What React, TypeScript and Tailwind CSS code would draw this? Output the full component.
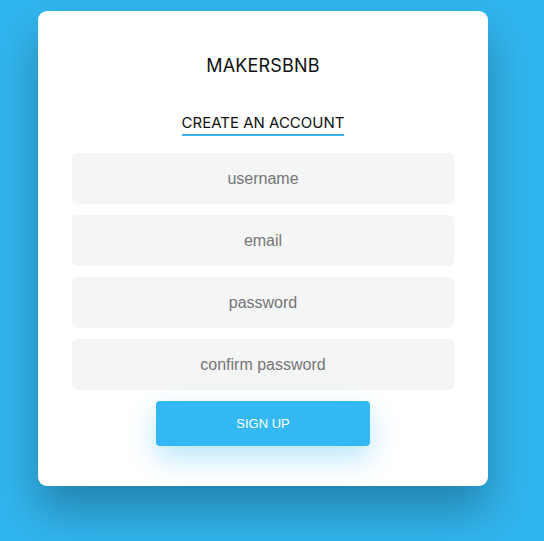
const fields = ['username', 'email', 'password', 'confirm password'];

export default function App() {
  return (
    <div className="min-h-[541px] w-full bg-[#31b5ee] pl-[38px] pt-[11px] overflow-hidden">
      <div className="w-[450px] h-[475px] bg-white rounded-[9px] shadow-[0_25px_45px_rgba(0,0,0,0.28)] px-[34px] pt-[43px] flex flex-col items-center">
        <h1 className="text-[18px] leading-[24px] text-[#111] font-['Inter','Open_Sans',sans-serif] tracking-[0.2px]">
          MAKERSBNB
        </h1>
        <h2 className="mt-[35px] text-[15px] leading-[20px] text-[#111] font-['Inter','Open_Sans',sans-serif] border-b-2 border-[#3ab4ea] pb-[1px]">
          CREATE AN ACCOUNT
        </h2>
        <form className="mt-[17px] w-full flex flex-col gap-[11px]">
          {fields.map((f) => (
            <input
              key={f}
              type={f.includes('password') ? 'password' : 'text'}
              placeholder={f}
              className="w-full h-[51px] bg-[#f4f5f5] rounded-[5px] text-center text-[16px] font-['Liberation_Sans',Arial,sans-serif] placeholder:text-[#757575] outline-none"
            />
          ))}
          <button
            type="button"
            className="self-center w-[214px] h-[45px] bg-[#34b8f4] rounded-[4px] text-white text-[13px] font-['Liberation_Sans',Arial,sans-serif] shadow-[0_12px_28px_rgba(52,184,244,0.35)]"
          >
            SIGN UP
          </button>
        </form>
      </div>
    </div>
  );
}
